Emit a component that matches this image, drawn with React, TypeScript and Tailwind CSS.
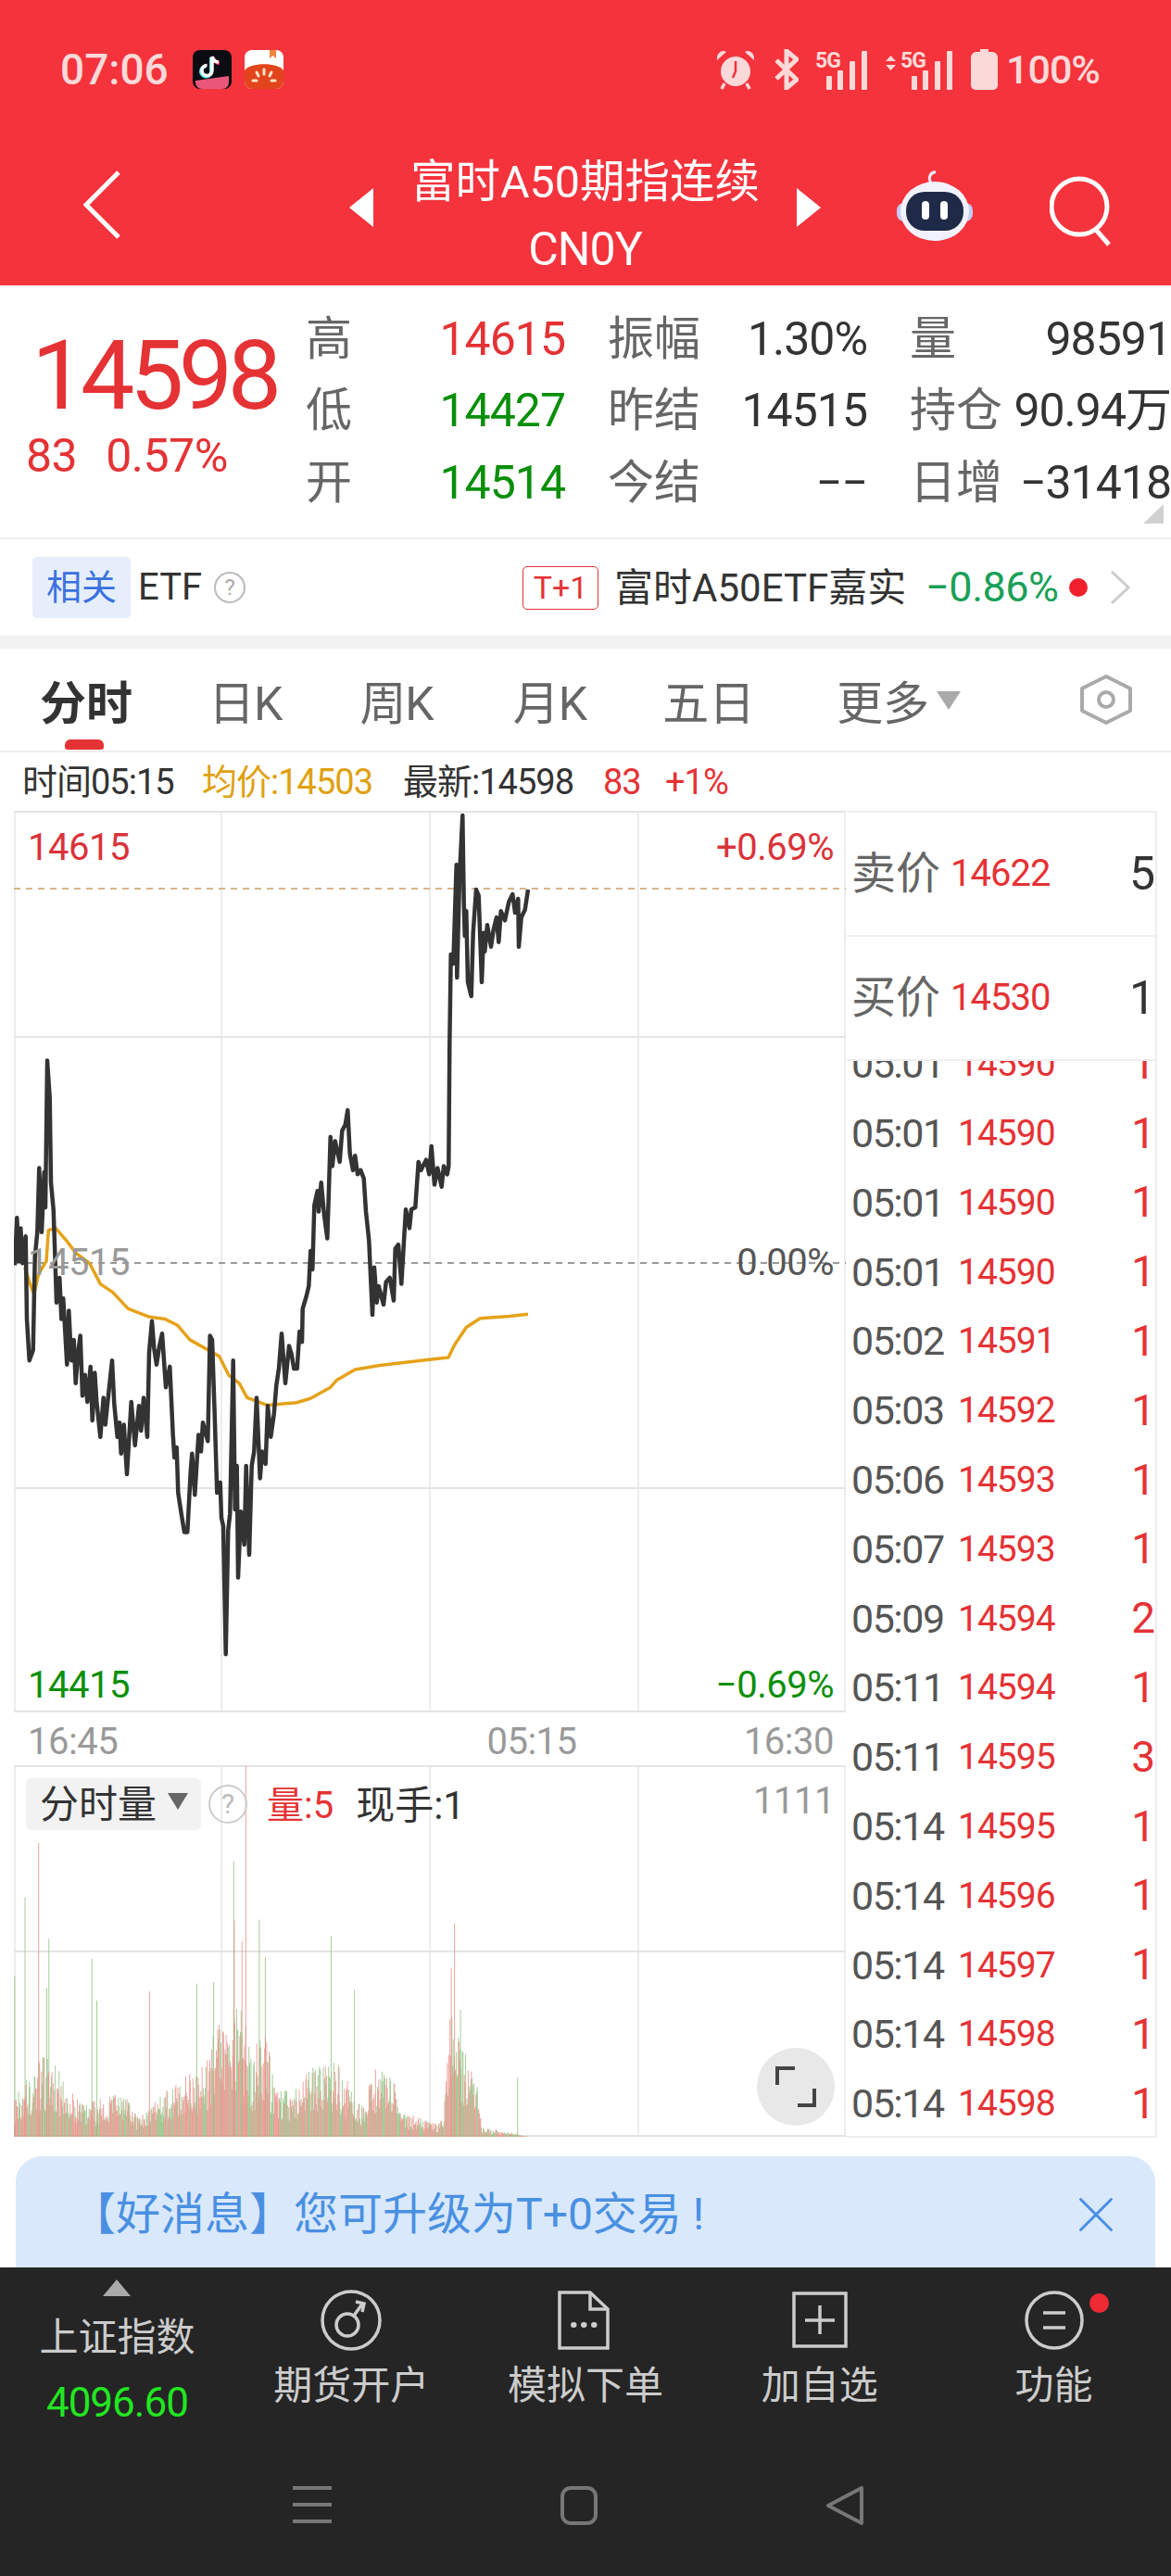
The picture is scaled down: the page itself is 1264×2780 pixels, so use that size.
import { X } from 'lucide-react';

// trace points, in coordinates of the zoomed crops
const crop8 = (x: number, y: number): [number, number] => [x / 3, 245 + y / 2.24];
const crop9 = (x: number, y: number): [number, number] => [285 + x / 3, 245 + y / 2.24];
const crop10 = (x: number, y: number): [number, number] => [455 + x / 3, y / 3 - 5];

const pricePoints = [
  ...[[3,550],[10,435],[16,540],[22,460],[28,545],[38,480],[42,680],[50,780],[62,755],[68,530],[76,470],[82,315],[90,470],[98,325],[102,410],[108,55],[116,145],[120,350],[128,415],[132,500],[138,640],[148,580],[154,680],[160,630],[172,790],[178,660],[186,780],[194,730],[200,835],[208,760],[215,720],[222,865],[230,815],[238,880],[248,795],[254,925],[262,810],[268,880],[280,965],[290,870],[296,935],[305,870],[318,780],[325,885],[335,965],[342,930],[347,1005],[356,935],[366,1055],[380,880],[392,985],[405,890],[412,950],[420,870],[432,965],[438,760],[447,685],[454,750],[462,790],[470,750],[480,715],[492,845],[505,795],[515,960],[520,1015],[527,990],[532,1100],[542,1150],[552,1195],[562,1195],[572,1050],[577,1005],[586,1105],[598,960],[606,1000],[612,930],[628,975],[635,720],[642,730],[650,910],[658,1100],[668,1075],[672,1160],[678,1180],[686,1490],[694,1190],[700,1150],[710,780],[716,1140],[722,1035],[726,1305],[735,1145],[746,1225],[752,1035],[762,1250],[770,1035],[778,1000],[786,870],[797,1065],[804,1000],[815,1030],[822,890],[832,965],[842,910],[850,840]].map(([x, y]) => crop8(x, y)),
  ...[[3,800],[12,715],[24,835],[36,745],[44,765],[52,800],[62,800],[70,710],[78,735],[80,655],[92,625],[100,600],[106,515],[112,560],[118,405],[128,370],[132,420],[140,350],[150,430],[160,485],[165,365],[170,240],[176,310],[185,250],[200,300],[208,225],[218,210],[226,175],[233,280],[243,320],[250,285],[258,330],[268,320],[278,340],[285,420],[295,490],[306,670],[312,555],[320,640],[326,600],[342,645],[350,590],[362,580],[375,635],[380,510],[390,500],[400,595],[414,415],[426,460],[432,415],[445,410],[455,300],[463,320],[480,295],[490,330],[497,262],[507,355],[517,315],[530,360],[537,310],[548,330],[553,310]].map(([x, y]) => crop9(x, y)),
  ...[[46,770],[50,480],[58,510],[68,190],[70,555],[78,230],[88,30],[92,310],[95,420],[100,340],[105,570],[116,615],[122,410],[132,270],[140,290],[150,570],[156,410],[160,470],[168,385],[180,455],[188,400],[198,360],[205,440],[212,340],[225,370],[238,310],[250,285],[258,345],[268,300],[270,455],[278,360],[290,335],[300,270]].map(([x, y]) => crop10(x, y)),
];

const avgPoints = [
  ...[[35,555],[50,590],[65,620],[80,570],[105,540],[112,465],[135,460],[170,490],[200,520],[245,545],[280,595],[320,615],[370,655],[440,675],[490,680],[530,695],[570,730],[630,755],[665,770],[695,815],[730,835],[755,870],[820,888]].map(([x, y]) => crop8(x, y)),
  ...[[15,885],[60,882],[105,872],[170,845],[190,828],[250,802],[330,792],[490,778],[552,773],[572,742],[610,700],[655,678],[750,673],[810,668]].map(([x, y]) => crop9(x, y)),
];

const toLine = (pts: [number, number][]) => pts.map(([x, y]) => `${x.toFixed(1)},${y.toFixed(1)}`).join(' ');

// volume bars, spikes read off the crop, the rest is filled from an envelope
const spikes: [number, number, 'r' | 'g'][] = [
  [27,760,'g'],[46,505,'g'],[71,330,'r'],[90,640,'g'],[86,800,'g'],[169,705,'g'],[178,840,'g'],[275,810,'r'],[362,785,'g'],[393,780,'g'],[430,390,'g'],[431,580,'r'],[445,650,'r'],[452,80,'r'],[477,578,'g'],[488,700,'g'],[609,630,'g'],[652,805,'g'],[836,590,'r'],[830,735,'r'],[847,870,'g'],[952,1090,'g'],
];

const envelopePoints = [
  [27,1150],[50,1070],[70,1040],[90,1000],[110,1070],[130,1130],[160,1170],[200,1150],[230,1130],[255,1220],[300,1140],[340,1080],[380,1040],[395,900],[420,950],[435,800],[450,860],[465,1060],[480,880],[495,1000],[510,1130],[540,1120],[580,1040],[620,1030],[640,1100],[665,1180],[690,1060],[720,1080],[745,1200],[790,1230],[815,1230],[828,860],[847,960],[860,1020],[880,1130],[886,1250],[920,1260],[972,1280],
];

const envelope = (x: number) => {
  for (let i = 1; i < envelopePoints.length; i++) {
    const [x0, y0] = envelopePoints[i - 1];
    const [x1, y1] = envelopePoints[i];
    if (x <= x1) return y0 + ((y1 - y0) * (x - x0)) / (x1 - x0);
  }
  return 1280;
};

function buildBars() {
  let seed = 17;
  const rand = () => {
    seed = (seed * 16807) % 2147483647;
    return seed / 2147483647;
  };
  let red = '';
  let green = '';
  for (let x = 26; x < 972; x += 1.2) {
    const e = envelope(x);
    const y = 1282 - (1282 - e) * (0.3 + 0.7 * rand());
    const seg = `M${(x / 1.704 - 15).toFixed(1)} 401V${((y - 78) / 3).toFixed(1)}`;
    if (rand() > 0.5) red += seg;
    else green += seg;
  }
  spikes.forEach(([x, y, c]) => {
    const seg = `M${(x / 1.704 - 15).toFixed(1)} 401V${((y - 78) / 3).toFixed(1)}`;
    if (c === 'r') red += seg;
    else green += seg;
  });
  return { red, green };
}

const bars = buildBars();

const ticks = [
  ['05:01', '14590', '1'],
  ['05:01', '14590', '1'],
  ['05:01', '14590', '1'],
  ['05:01', '14590', '1'],
  ['05:02', '14591', '1'],
  ['05:03', '14592', '1'],
  ['05:06', '14593', '1'],
  ['05:07', '14593', '1'],
  ['05:09', '14594', '2'],
  ['05:11', '14594', '1'],
  ['05:11', '14595', '3'],
  ['05:14', '14595', '1'],
  ['05:14', '14596', '1'],
  ['05:14', '14597', '1'],
  ['05:14', '14598', '1'],
  ['05:14', '14598', '1'],
];

function Signal({ arrows }: { arrows?: boolean }) {
  return (
    <svg width={arrows ? 72 : 58} height="56" viewBox={arrows ? '-16 -8 72 56' : '0 -8 58 56'} fill="#fbd9d9">
      {arrows && <path d="M-16 11l5.500-6 5.500 6zM-16 15l5.500 6 5.500-6z" />}
      <text x="0" y="18" fontSize="23" fontWeight="700" fontFamily="Roboto" letterSpacing="-1">5G</text>
      <rect x="12" y="27" width="6" height="15" rx="1" />
      <rect x="24" y="21" width="6" height="21" rx="1" />
      <rect x="37" y="11" width="6" height="31" rx="1" />
      <rect x="50" y="0" width="6" height="42" rx="1" />
    </svg>
  );
}

function Header() {
  return (
    <header className="h-[308px] bg-[#f4333c] text-white">
      <div className="flex h-[150px] items-center pl-[65px]">
        <span className="w-[143px] text-[46px] font-medium text-[#fbd9d9]">07:06</span>
        <svg width="42" height="42" viewBox="0 0 42 42">
          <rect width="42" height="42" rx="8" fill="#0b0b12" />
          <path d="M3 33l36-5v7a7 7 0 0 1-7 7H10a7 7 0 0 1-7-7z" fill="#e8577a" />
          <path d="M21 7v15a5.500 5.500 0 1 1-5.500-5.500" fill="none" stroke="#5ee" strokeWidth="4" transform="translate(-1 1)" />
          <path d="M21 7c1 4 4 6 7 6" fill="none" stroke="#f25" strokeWidth="4" transform="translate(1 1)" />
          <path d="M21 7v15a5.500 5.500 0 1 1-5.500-5.500M21 7c1 4 4 6 7 6" fill="none" stroke="#fff" strokeWidth="3.5" />
        </svg>
        <svg className="ml-[14px]" width="42" height="42" viewBox="0 0 42 42">
          <rect width="42" height="42" rx="8" fill="#fff" />
          <path d="M0 22c5-9 37-9 42 0v12a8 8 0 0 1-8 8H8a8 8 0 0 1-8-8z" fill="#e2451c" />
          <path d="M27 0v9l3.500-3 3.500 3V0z" fill="#f0843c" />
          <path d="M21 21v5M13 24l2 4M29 24l-2 4M9 33h4M29 33h4" stroke="#fde3c8" strokeWidth="3" strokeLinecap="round" />
        </svg>
        <svg className="ml-[467px]" width="42" height="44" viewBox="0 0 42 44" fill="#fbd9d9">
          <path d="M1 12C0 5 6 0 11 3zM41 12c1-7-5-12-10-9z" />
          <circle cx="21" cy="24" r="16" />
          <path d="M21 13v11l-3 7" fill="none" stroke="#f4333c" strokeWidth="2.5" />
          <path d="M9 37l-3 6M33 37l3 6" stroke="#fbd9d9" strokeWidth="3.5" />
        </svg>
        <svg className="ml-[21px]" width="26" height="44" viewBox="0 0 26 44" fill="none" stroke="#fbd9d9" strokeWidth="5">
          <path d="M2 12l22 21-11 9V2l11 9L2 32" />
        </svg>
        <span className="ml-[18px] flex"><Signal /></span>
        <span className="ml-[18px] flex"><Signal arrows /></span>
        <svg className="ml-[20px]" width="29" height="44" viewBox="0 0 29 44" fill="#fbd9d9">
          <path d="M10 0h9v3h4a6 6 0 0 1 6 6v30a5 5 0 0 1-5 5H5a5 5 0 0 1-5-5V9a6 6 0 0 1 6-6h4z" />
        </svg>
        <span className="ml-[9px] text-[43px] font-medium leading-none tracking-[-1px] text-[#fbd9d9]">100%</span>
      </div>

      <div className="flex pl-[90px]">
        <svg className="mt-[34px]" width="40" height="74" viewBox="0 0 40 74" fill="none" stroke="#fff" strokeWidth="5">
          <path d="M38 2L3 37l35 35" />
        </svg>
        <div className="ml-[247px] mt-[53px] h-0 w-0 border-y-[21px] border-r-[26px] border-y-transparent border-r-white" />
        <div className="w-[457px] pt-[11px] text-center">
          <div className="h-[72px] text-[48.5px] leading-[72px]">富时A50期指连续</div>
          <div className="h-[72px] text-[50px] leading-[72px] tracking-[-1px]">CN0Y</div>
        </div>
        <div className="mt-[53px] h-0 w-0 border-y-[21px] border-l-[26px] border-y-transparent border-l-white" />
        <svg className="ml-[82px] mt-[33px]" width="82" height="78" viewBox="0 0 82 78">
          <path d="M37 14c-4-5 0-12 5-11" fill="none" stroke="#e6e9fb" strokeWidth="3" />
          <rect x="0" y="36" width="82" height="20" rx="8" fill="#c5cdf5" />
          <ellipse cx="41" cy="45" rx="37" ry="32" fill="#f1f2fd" />
          <rect x="10" y="24" width="62" height="42" rx="20" fill="#1f2a48" />
          <rect x="27" y="34" width="8" height="20" rx="4" fill="#fff" />
          <rect x="47" y="34" width="8" height="20" rx="4" fill="#fff" />
        </svg>
        <svg className="ml-[83px] mt-[40px]" width="66" height="76" viewBox="0 0 66 76" fill="none" stroke="#fff" strokeWidth="5">
          <circle cx="32" cy="33" r="30" />
          <path d="M50 58l14 16" />
        </svg>
      </div>
    </header>
  );
}

function Stat({ label, value, tone }: { label: string; value: string; tone: string }) {
  return (
    <div className="flex items-center justify-between">
      <span className="text-[50px] leading-none text-[#666]">{label}</span>
      <span className={`text-[50px] leading-none tracking-[-1px] ${tone}`}>{value}</span>
    </div>
  );
}

function Quote() {
  return (
    <section className="relative flex h-[272px] bg-white">
      <div className="w-[330px] shrink-0">
        <div className="mt-[41px] pl-[34px] text-[104px] leading-[114px] tracking-[-5.5px] text-[#e53235]">14598</div>
        <div className="flex pl-[28px] text-[50px] leading-[58px] tracking-[-0.5px] text-[#e53235]">
          <span>83</span>
          <span className="ml-[31px]">0.57%</span>
        </div>
      </div>
      <div className="grid h-[252px] w-[934px] grid-cols-[280px_280px_282px] grid-rows-3 gap-x-[46px] pt-[19px]">
        <Stat label="高" value="14615" tone="text-[#e53235]" />
        <Stat label="振幅" value="1.30%" tone="text-[#333]" />
        <Stat label="量" value="98591" tone="text-[#333]" />
        <Stat label="低" value="14427" tone="text-[#0a8f0a]" />
        <Stat label="昨结" value="14515" tone="text-[#333]" />
        <Stat label="持仓" value="90.94万" tone="text-[#333]" />
        <Stat label="开" value="14514" tone="text-[#0a8f0a]" />
        <Stat label="今结" value="−−" tone="text-[#333]" />
        <Stat label="日增" value="−31418" tone="text-[#333]" />
      </div>
      <div className="absolute bottom-[15px] right-[8px] h-0 w-0 border-b-[21px] border-l-[22px] border-b-[#d0d0d0] border-l-transparent" />
    </section>
  );
}

function Related() {
  return (
    <section className="flex h-[106px] items-center border-t-2 border-[#eee] bg-white">
      <span className="ml-[35px] flex h-[66px] w-[106px] items-center justify-center rounded-[5px] bg-[#e6eefb] text-[38px] text-[#3b72e0]">相关</span>
      <span className="ml-[8px] text-[40px] text-[#333]">ETF</span>
      <span className="ml-[13px] flex h-[34px] w-[34px] items-center justify-center rounded-full border-2 border-[#bbb] text-[24px] leading-none text-[#aaa]">?</span>
      <span className="ml-[299px] flex h-[47px] w-[82px] items-center justify-center rounded-[5px] border border-[#e53235] text-[34px] text-[#e53235]">T+1</span>
      <span className="ml-[17px] w-[320px] whitespace-nowrap text-[42px] text-[#333]">富时A50ETF嘉实</span>
      <span className="ml-[16px] w-[140px] whitespace-nowrap text-[45px] tracking-[-0.5px] text-[#1aa058]">−0.86%</span>
      <span className="ml-[15px] h-[20px] w-[20px] rounded-full bg-[#f0202c]" />
      <svg className="ml-[24px]" width="22" height="36" viewBox="0 0 22 36" fill="none" stroke="#ccc" strokeWidth="3">
        <path d="M2 1l18 17L2 35" />
      </svg>
    </section>
  );
}

function Tabs() {
  return (
    <nav className="flex h-[112px] items-center border-b-2 border-[#eee] bg-white pl-[43px] pt-[10px] text-[50px] leading-none text-[#666]">
      <span className="relative font-bold text-[#333]">
        分时
        <span className="absolute left-[27px] top-[63px] h-[11px] w-[42px] rounded-t-[6px] rounded-b-[3px] bg-[#e53235]" />
      </span>
      <span className="ml-[82px] tracking-[-1px]">日K</span>
      <span className="ml-[84px] tracking-[-1px]">周K</span>
      <span className="ml-[86px] tracking-[-1px]">月K</span>
      <span className="ml-[82px]">五日</span>
      <span className="ml-[88px]">更多</span>
      <span className="mb-[8px] ml-[8px] h-0 w-0 border-x-[13px] border-t-[20px] border-x-transparent border-t-[#aaa]" />
      <svg className="ml-[129px] -mt-[10px]" width="56" height="54" viewBox="0 0 56 54" fill="none" stroke="#aaa" strokeWidth="4" strokeLinejoin="round">
        <path d="M28 2l26 13v24L28 52 2 39V15z" />
        <circle cx="28" cy="27" r="8" />
      </svg>
    </nav>
  );
}

function InfoLine() {
  return (
    <div className="flex h-[63px] items-center bg-white pl-[24px] text-[38px] leading-none tracking-[-1px]">
      <span className="w-[194px] text-[#333]">时间05:15</span>
      <span className="w-[217px] text-[#e0a010]">均价:14503</span>
      <span className="w-[216px] text-[#333]">最新:14598</span>
      <span className="w-[67px] text-[#e53235]">83</span>
      <span className="text-[#e53235]">+1%</span>
    </div>
  );
}

function PriceChart() {
  return (
    <div className="relative h-[973px] text-[40px] leading-none tracking-[-0.5px]">
      <svg width="898" height="973" viewBox="0 0 898 973" className="block overflow-hidden">
        <path d="M1 0V973M224 0V973M449 0V973M674 0V973M897 0V973" stroke="#ececec" strokeWidth="2" />
        <path d="M0 1H898M0 244H898M0 731H898M0 972H898" stroke="#e4e4e4" strokeWidth="2" />
        <path d="M0 84H898" stroke="#d9b48a" strokeWidth="2" strokeDasharray="7 6" />
        <path d="M0 488H898" stroke="#999" strokeWidth="2" strokeDasharray="7 6" />
        <polyline points={toLine(avgPoints)} fill="none" stroke="#e5a21a" strokeWidth="3.5" strokeLinejoin="round" />
        <polyline points={toLine(pricePoints)} fill="none" stroke="#333" strokeWidth="4.5" strokeLinejoin="round" />
      </svg>
      <span className="absolute left-[15px] top-[20px] text-[#d9333a]">14615</span>
      <span className="absolute right-[13px] top-[20px] text-[#d9333a]">+0.69%</span>
      <span className="absolute left-[15px] top-[468px] text-[#999]">14515</span>
      <span className="absolute right-[13px] top-[468px] text-[#555]">0.00%</span>
      <span className="absolute left-[15px] top-[924px] text-[#0a8f0a]">14415</span>
      <span className="absolute right-[13px] top-[924px] text-[#0a8f0a]">−0.69%</span>
    </div>
  );
}

function VolumeChart() {
  return (
    <div className="relative h-[401px]">
      <svg width="898" height="401" viewBox="0 0 898 401" className="block">
        <path d="M1 0V401M224 0V401M449 0V401M674 0V401M897 0V401" stroke="#ececec" strokeWidth="2" />
        <path d="M0 1H898M0 201H898M0 400H898" stroke="#e4e4e4" strokeWidth="2" />
        <path d={bars.green} stroke="#8fc07f" strokeOpacity="0.8" strokeWidth="1" />
        <path d={bars.red} stroke="#e98d86" strokeOpacity="0.8" strokeWidth="1" />
      </svg>
      <div className="absolute left-[13px] top-[14px] flex h-[56px] items-center gap-[12px]">
        <span className="flex h-[56px] w-[189px] items-center rounded-[6px] bg-[#f2f2f2] pl-[15px] text-[42px] text-[#333]">
          分时量
          <span className="mb-[6px] ml-[12px] h-0 w-0 border-x-[11px] border-t-[18px] border-x-transparent border-t-[#666]" />
        </span>
        <span className="-ml-[4px] flex h-[42px] w-[42px] items-center justify-center rounded-full border-2 border-[#ccc] text-[30px] leading-none text-[#bbb]">?</span>
        <span className="ml-[9px] mt-[3px] text-[40px] text-[#e53235]">量:5</span>
        <span className="ml-[12px] mt-[3px] text-[42px] text-[#333]">现手:1</span>
      </div>
      <span className="absolute right-[12px] top-[19px] text-[40px] leading-none tracking-[-0.5px] text-[#999]">1111</span>
      <div className="absolute bottom-[12px] right-[12px] flex h-[84px] w-[84px] items-center justify-center rounded-full bg-[#e8e8e8]">
        <svg width="44" height="44" viewBox="0 0 44 44" fill="none" stroke="#444" strokeWidth="4">
          <path d="M21 2H2V20M42 24V42H24" />
        </svg>
      </div>
    </div>
  );
}

function SidePanel() {
  return (
    <aside className="ml-px w-[335px] shrink-0 border-r-2 border-b-2 border-[#eee]">
      {[
        ['卖价', '14622', '5'],
        ['买价', '14530', '1'],
      ].map(([label, price, qty]) => (
        <div key={label} className="relative z-10 flex h-[134px] items-center border-t-2 border-[#eee] bg-white pl-[5px]">
          <span className="text-[48px] text-[#666]">{label}</span>
          <span className="ml-[11px] text-[40px] tracking-[-1px] text-[#e53235]">{price}</span>
          <span className="ml-auto text-[50px] text-[#333]">{qty}</span>
        </div>
      ))}
      <div className="h-[1162px] overflow-hidden border-t-2 border-[#eee]">
        <div className="-mt-[34px]">
          {ticks.map(([time, price, qty], i) => (
            <div key={i} className="flex h-[74.8px] items-center pl-[5px]">
              <span className="w-[115px] text-[43px] tracking-[-1.5px] text-[#555]">{time}</span>
              <span className="text-[39px] tracking-[-1px] text-[#e53235]">{price}</span>
              <span className="ml-auto text-[46px] text-[#e53235]">{qty}</span>
            </div>
          ))}
        </div>
      </div>
    </aside>
  );
}

function Market() {
  return (
    <section className="flex bg-white pl-[15px]">
      <div className="w-[898px] shrink-0">
        <PriceChart />
        <div className="flex h-[57px] items-center justify-between pl-[15px] pr-[13px] pt-[6px] text-[40px] tracking-[-0.5px] text-[#999]">
          <span>16:45</span>
          <span className="ml-[218px]">05:15</span>
          <span>16:30</span>
        </div>
        <VolumeChart />
      </div>
      <SidePanel />
    </section>
  );
}

function Banner() {
  return (
    <div className="bg-white px-[17px] pt-[20px]">
      <div className="flex h-[120px] items-center justify-between rounded-t-[28px] bg-[#d9e8fb] pl-[60px] pr-[31px] pt-[6px] text-[48px] text-[#4a90e2]">
        <span>【好消息】您可升级为T+0交易 !</span>
        <X size={66} strokeWidth={1.1} />
      </div>
    </div>
  );
}

function BottomBar() {
  return (
    <footer className="h-[333px] bg-[#252525]">
      <div className="grid h-[206px] grid-cols-5 text-[42px] leading-none text-[#ccc]">
        <div className="flex flex-col items-center pt-[13px]">
          <span className="h-0 w-0 border-x-[15px] border-b-[18px] border-x-transparent border-b-[#aaa]" />
          <span className="mt-[24px]">上证指数</span>
          <span className="mt-[27px] text-[44px] tracking-[-1px] text-[#22e622]">4096.60</span>
        </div>
        <TabItem label="期货开户">
          <circle cx="33" cy="33" r="31" />
          <circle cx="29" cy="38" r="12" />
          <path d="M36 28l10-14M38 13l9 2-2 9" />
        </TabItem>
        <TabItem label="模拟下单">
          <path d="M5 3h33l19 18v42H5z" />
          <path d="M38 3v18h19" />
          <path d="M20 38h.5M31 38h.5M42 38h.5" strokeWidth="6" strokeLinecap="round" />
        </TabItem>
        <TabItem label="加自选">
          <rect x="5" y="4" width="56" height="57" />
          <path d="M33 17v31M17 33h32" />
        </TabItem>
        <TabItem label="功能" dot>
          <circle cx="33" cy="33" r="30" />
          <path d="M21 25h24M21 41h24" />
        </TabItem>
      </div>
      <div className="flex h-[127px] items-start pl-[316px] pt-[30px]">
        <svg width="42" height="40" viewBox="0 0 42 40" fill="#777">
          <rect width="42" height="4" />
          <rect y="18" width="42" height="4" />
          <rect y="36" width="42" height="4" />
        </svg>
        <svg className="ml-[247px]" width="40" height="42" viewBox="0 0 40 42" fill="none" stroke="#777" strokeWidth="4">
          <rect x="2" y="2" width="36" height="38" rx="9" />
        </svg>
        <svg className="ml-[247px]" width="40" height="42" viewBox="0 0 40 42" fill="none" stroke="#777" strokeWidth="4" strokeLinejoin="round">
          <path d="M38 2v38L2 21z" />
        </svg>
      </div>
    </footer>
  );
}

function TabItem({ label, dot, children }: { label: string; dot?: boolean; children: React.ReactNode }) {
  return (
    <div className="relative flex flex-col items-center pt-[24px]">
      <svg width="66" height="66" viewBox="0 0 66 66" fill="none" stroke="#ccc" strokeWidth="3.5">
        {children}
      </svg>
      <span className="mt-[17px]">{label}</span>
      {dot && <span className="absolute left-[165px] top-[28px] h-[21px] w-[21px] rounded-full bg-[#ee2a33]" />}
    </div>
  );
}

export default function App() {
  return (
    <div className="h-[2780px] w-[1264px] overflow-hidden bg-white font-[family-name:Roboto,Noto_Sans_CJK_SC,sans-serif]">
      <Header />
      <Quote />
      <Related />
      <div className="h-[14px] bg-[#f2f2f2]" />
      <Tabs />
      <InfoLine />
      <Market />
      <Banner />
      <BottomBar />
    </div>
  );
}
